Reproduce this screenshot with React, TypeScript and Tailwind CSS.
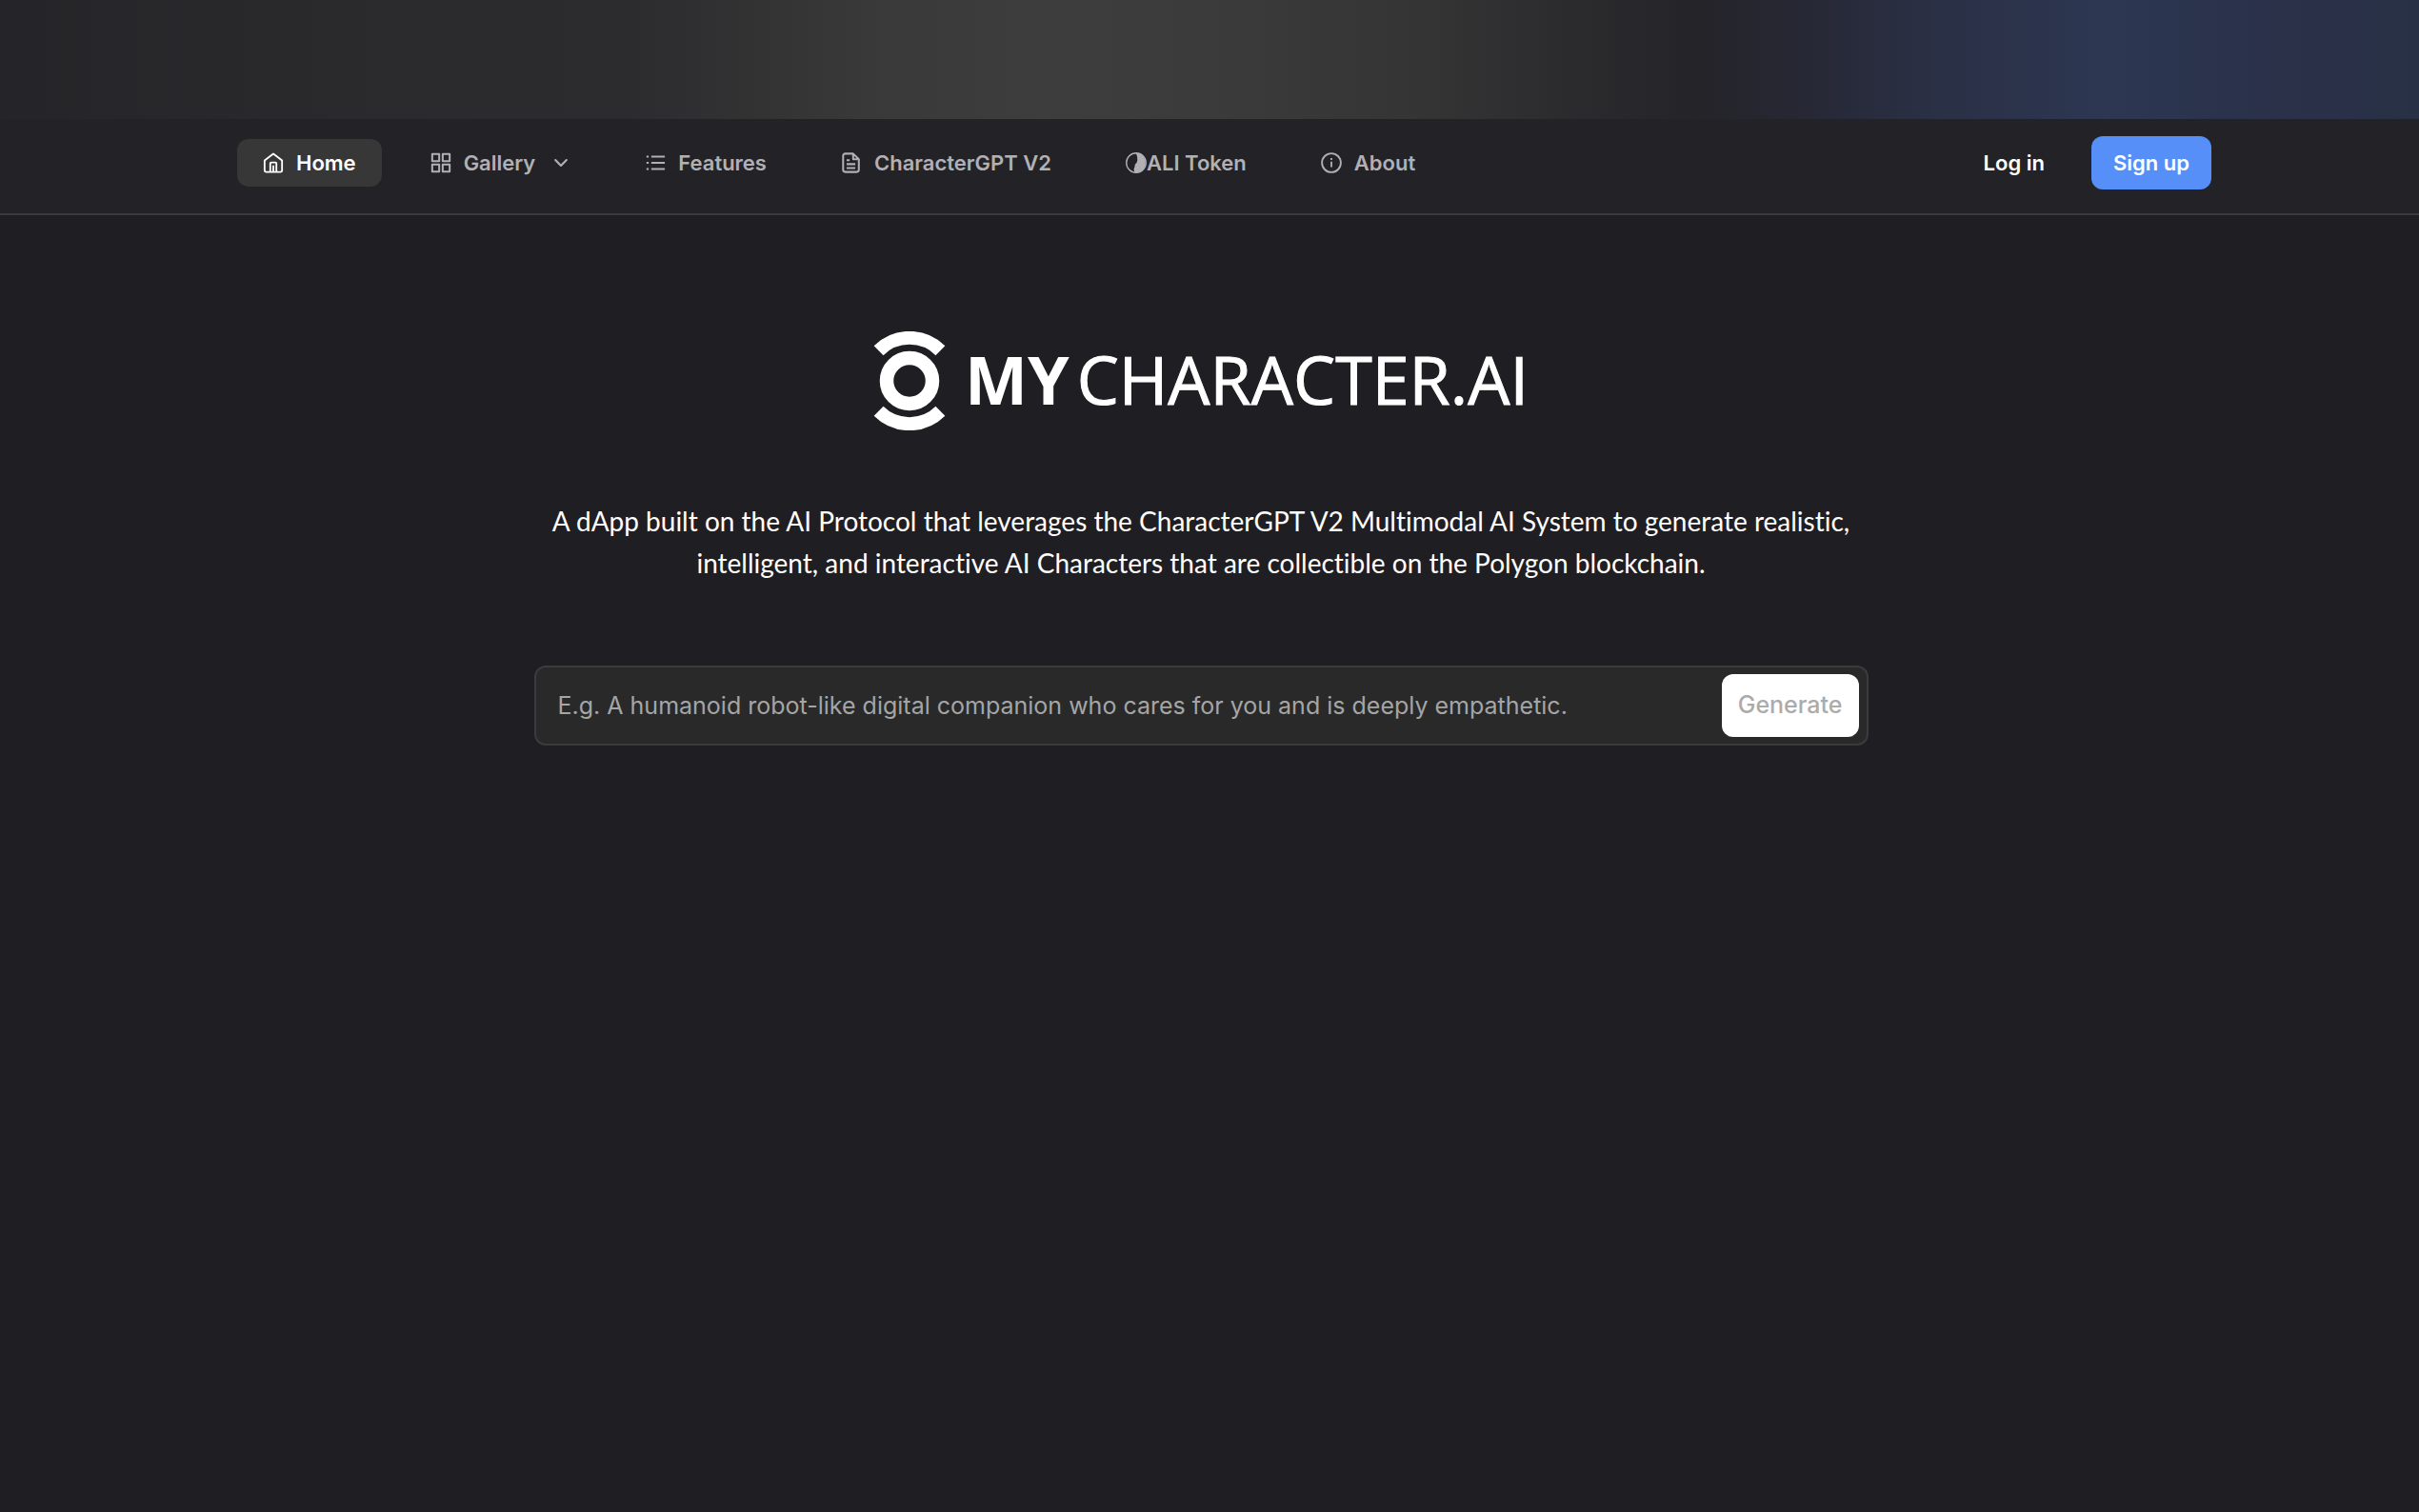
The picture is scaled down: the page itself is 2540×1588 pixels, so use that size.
import React from "react";

type IconProps = { className?: string };

const HomeIcon = ({ className }: IconProps) => (
  <svg viewBox="0 0 24 24" className={className} fill="none" stroke="currentColor" strokeWidth="2" strokeLinejoin="round" aria-hidden="true">
    <path d="M2 9.2 12 1.6l10 7.6v11.3a2 2 0 0 1-2 2H4a2 2 0 0 1-2-2z" />
    <path d="M8.500 22v-9.500a1 1 0 0 1 1-1h5a1 1 0 0 1 1 1V22M12 15v7" />
  </svg>
);

const GridIcon = ({ className }: IconProps) => (
  <svg viewBox="0 0 24 24" className={className} fill="none" stroke="currentColor" strokeWidth="2.200" strokeLinejoin="round" aria-hidden="true">
    <path d="M2 2h8v8H2zM14 2h8v8h-8zM2 14h8v8H2zM14 14h8v8h-8z" />
  </svg>
);

const ListIcon = ({ className }: IconProps) => (
  <svg viewBox="0 0 24 24" className={className} fill="none" stroke="currentColor" strokeWidth="2.200" aria-hidden="true">
    <path d="M7.500 5H23M7.500 12H23M7.500 19H23" />
    <path d="M2 5h2.500M2 12h2.500M2 19h2.500" />
  </svg>
);

const DocIcon = ({ className }: IconProps) => (
  <svg viewBox="0 0 24 24" className={className} fill="none" stroke="currentColor" strokeWidth="2.200" strokeLinejoin="round" aria-hidden="true">
    <path d="M14 1.500H5A2.500 2.500 0 0 0 2.500 4v16A2.500 2.500 0 0 0 5 22.500h13a2.500 2.500 0 0 0 2.500-2.500V8zM14 1.500V8h6.500" />
    <path d="M6.500 9H10M6.500 13.500h10M6.500 18h10" />
  </svg>
);

const TokenIcon = ({ className }: IconProps) => (
  <svg viewBox="0 0 24 24" className={className} aria-hidden="true">
    <circle cx="12" cy="12" r="11.200" fill="none" stroke="currentColor" strokeWidth="1.500" />
    <path d="M11 .4a11.600 11.600 0 1 1 0 23.200c-2-2.500-2-4.700-.8-6.700.7-1.400-.2-2.200.9-3.500 1.200-1.400 2.300-2.500 2.300-5C13.400 5 13 3 11 .4z" fill="currentColor" />
  </svg>
);

const InfoIcon = ({ className }: IconProps) => (
  <svg viewBox="0 0 24 24" className={className} fill="none" stroke="currentColor" strokeWidth="2" aria-hidden="true">
    <circle cx="12" cy="12" r="10.800" />
    <path d="M12 10.500V17M12 6.500v2.200" />
  </svg>
);

const Chevron = ({ className }: IconProps) => (
  <svg viewBox="0 0 24 24" className={className} fill="none" stroke="currentColor" strokeWidth="2.600" strokeLinecap="round" strokeLinejoin="round" aria-hidden="true">
    <path d="m5 8.500 7 7 7-7" />
  </svg>
);

const LogoMark = ({ className }: IconProps) => (
  <svg viewBox="0 0 76 104" className={className} fill="none" stroke="white" aria-hidden="true">
    <circle cx="38" cy="52" r="24" strokeWidth="14.500" />
    <path d="M5.600 20.200A46 46 0 0 1 70.400 20.200" strokeWidth="14" />
    <path d="M5.600 83.800A46 46 0 0 0 70.400 83.800" strokeWidth="14" />
  </svg>
);

const items = [
  { label: "Gallery", Icon: GridIcon, gap: "gap-[13px]", menu: true },
  { label: "Features", Icon: ListIcon, gap: "gap-[13px]", menu: false },
  { label: "CharacterGPT V2", Icon: DocIcon, gap: "gap-[13px]", menu: false },
  { label: "ALI Token", Icon: TokenIcon, gap: "gap-0", menu: false },
  { label: "About", Icon: InfoIcon, gap: "gap-[13px]", menu: false },
];

export default function App() {
  return (
    <div className="min-h-screen bg-[#1f1e23] font-['Inter',sans-serif] text-white">
      <div className="h-[125px] bg-[linear-gradient(90deg,#252529_0%,#28282b_8%,#2b2b2d_18%,#2c2c2f_26%,#323233_31%,#39393a_36%,#3d3d3e_43%,#3b3b3c_50%,#343435_59%,#2b2b2d_65%,#252429_70%,#262733_74%,#2a3045_80%,#2d3752_87%,#2a3149_94%,#283046_100%)]" />
      <header className="flex h-[101px] items-start justify-between border-b-2 border-[#3a393e] bg-[#232226] pt-[18px] pr-[218px] pl-[249px] text-[22px] font-semibold">
        <nav className="flex items-center gap-6 pt-[3px]" aria-label="Main">
          <a href="#home" aria-current="page" className="flex h-[50px] items-center gap-[13px] rounded-xl bg-[#373737] px-[27px]">
            <HomeIcon className="size-[22px]" />
            Home
          </a>
          {items.map(({ label, Icon, gap, menu }) => (
            <a key={label} href="#" className={`flex h-[50px] items-center px-[27px] text-[#b1b1b5] ${gap}`}>
              <Icon className="size-[22px]" />
              {label}
              {menu && <Chevron className="ml-1 size-5" />}
            </a>
          ))}
        </nav>
        <div className="flex items-center">
          <a href="#login" className="px-[49px]">Log in</a>
          <button type="button" className="h-14 rounded-xl bg-[#568ff8] px-[23px]">Sign up</button>
        </div>
      </header>
      <main className="flex flex-col items-center pt-[122px] pr-[18px]">
        <h1 className="flex h-[104px] items-center gap-5 font-['Open_Sans',sans-serif] text-[70px] leading-none">
          <LogoMark className="h-[104px] w-[76px]" />
          <span className="flex gap-2 pb-1">
            <b className="font-bold">MY</b>
            <span className="[-webkit-text-stroke:1px_white]">CHARACTER.AI</span>
          </span>
        </h1>
        <p className="mt-[73px] max-w-[1401px] text-center font-['Lato',sans-serif] text-[28px] leading-[44px] [font-variant-ligatures:none]">
          A dApp built on the AI Protocol that leverages the CharacterGPT V2 Multimodal AI System to generate realistic,
          intelligent, and interactive AI Characters that are collectible on the Polygon blockchain.
        </p>
        <form className="mt-[86px] flex h-[84px] w-full max-w-[1401px] items-center rounded-xl border-2 border-[#3b3b3d] bg-[#292929] pr-2 pl-[23px] text-[25px]" onSubmit={(e) => e.preventDefault()}>
          <input
            type="text"
            aria-label="Character description"
            placeholder="E.g. A humanoid robot-like digital companion who cares for you and is deeply empathetic."
            className="h-full min-w-0 flex-1 bg-transparent outline-none placeholder:text-[#a5a5a5]"
          />
          <button type="submit" className="h-[66px] rounded-xl bg-white px-[17px] font-medium text-[#ababab]">Generate</button>
        </form>
      </main>
    </div>
  );
}
